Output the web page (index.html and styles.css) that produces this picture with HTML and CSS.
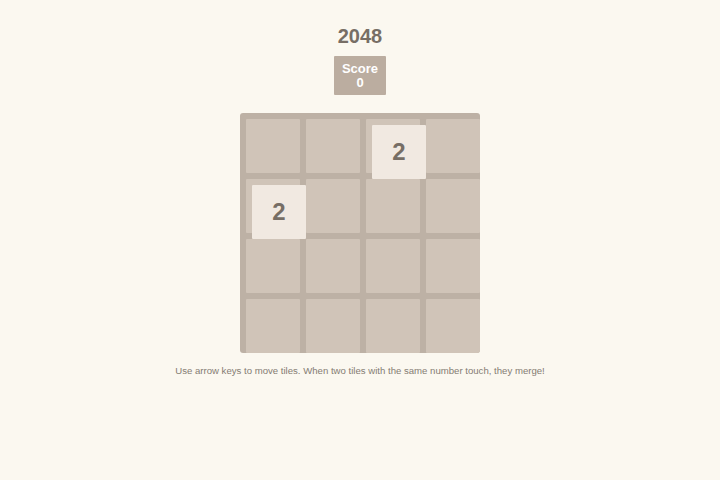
FILE: index.html
```html
<!DOCTYPE html>
<html>
<head>
<meta charset="utf-8">
<link rel="stylesheet" href="styles.css">
</head>
<body>
<div class="page">
  <h1 class="title">2048</h1>
  <div class="score">
    <div>Score</div>
    <div>0</div>
  </div>
  <div class="board">
    <div class="grid">
      <div class="cell"></div><div class="cell"></div><div class="cell"></div><div class="cell"></div>
      <div class="cell"></div><div class="cell"></div><div class="cell"></div><div class="cell"></div>
      <div class="cell"></div><div class="cell"></div><div class="cell"></div><div class="cell"></div>
      <div class="cell"></div><div class="cell"></div><div class="cell"></div><div class="cell"></div>
    </div>
    <div class="tile tile-a">2</div>
    <div class="tile tile-b">2</div>
  </div>
  <p class="help">Use arrow keys to move tiles. When two tiles with the same number touch, they merge!</p>
</div>
</body>
</html>
```
FILE: styles.css
```css
html, body {
  margin: 0;
  padding: 0;
  background: #fbf8f0;
  font-family: "Liberation Sans", Arial, sans-serif;
  color: #776e65;
}
.page {
  display: flex;
  flex-direction: column;
  align-items: center;
  padding-top: 24px;
}
.title {
  margin: 0;
  font-size: 20px;
  line-height: 24px;
  font-weight: bold;
  color: #776e65;
}
.score {
  margin-top: 8px;
  width: 52px;
  height: 39px;
  box-sizing: border-box;
  padding-top: 6px;
  background: #bbada0;
  color: #fff;
  font-weight: bold;
  font-size: 13px;
  line-height: 14px;
  text-align: center;
  border-radius: 1px;
}
.board {
  position: relative;
  margin-top: 18px;
  width: 240px;
  height: 240px;
  box-sizing: border-box;
  padding: 6px 0 0 6px;
  background: #bdb1a5;
  border-radius: 3px;
  overflow: hidden;
}
.grid {
  display: grid;
  grid-template-columns: repeat(4, 54px);
  grid-template-rows: repeat(4, 54px);
  gap: 6px;
}
.cell {
  background: #d0c4b8;
  border-radius: 1px;
}
.tile {
  position: absolute;
  width: 54px;
  height: 54px;
  background: #f1e9e1;
  border-radius: 1px;
  display: flex;
  align-items: center;
  justify-content: center;
  font-size: 24px;
  font-weight: bold;
  color: #776e65;
}
.tile-a {
  left: 132px;
  top: 12px;
}
.tile-b {
  left: 12px;
  top: 72px;
}
.help {
  margin: 11px 0 0;
  font-size: 9.6px;
  line-height: 13px;
  color: #857c73;
}
```
